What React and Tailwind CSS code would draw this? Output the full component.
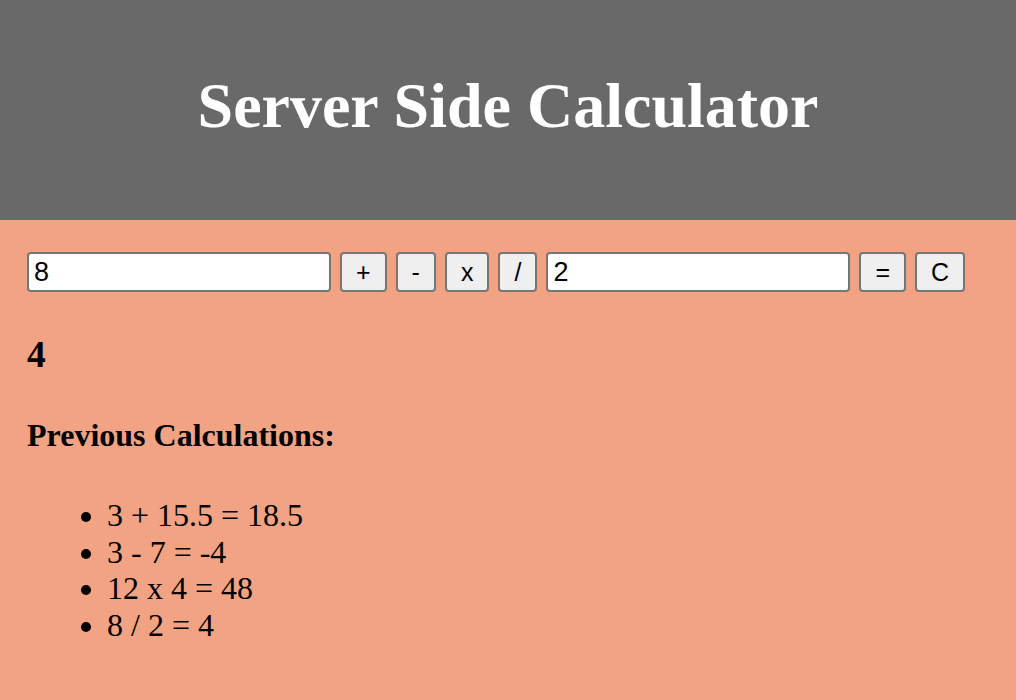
import { useState } from 'react'

const history = ['3 + 15.5 = 18.5', '3 - 7 = -4', '12 x 4 = 48', '8 / 2 = 4']
const ops = ['+', '-', 'x', '/']

export default function App() {
  const [first, setFirst] = useState('8')
  const [second, setSecond] = useState('2')

  const btn =
    "h-[40px] rounded-[4px] border-2 border-[#767676] bg-[#efefef] px-[14px] font-['Liberation_Sans',Arial,sans-serif] text-[25px] leading-none text-black"
  const field =
    "h-[40px] w-[304px] rounded-[4px] border-2 border-[#767676] bg-white px-[5px] font-['Liberation_Sans',Arial,sans-serif] text-[27px] text-black outline-none"

  return (
    <div className="min-h-[700px] bg-[#f2a383] font-['Liberation_Serif','Times_New_Roman',serif] text-black">
      {/* Header */}
      <header className="h-[220px] bg-[#696969] pt-[69px]">
        <h1 className="text-center text-[64px] font-bold leading-[74px] text-white">Server Side Calculator</h1>
      </header>

      <main className="px-[27px]">
        {/* Inputs */}
        <div className="mt-[32px] flex items-center gap-[9px]">
          <input className={field} value={first} onChange={(e) => setFirst(e.target.value)} />
          {ops.map((op) => (
            <button key={op} className={btn}>
              {op}
            </button>
          ))}
          <input className={field} value={second} onChange={(e) => setSecond(e.target.value)} />
          <button className={btn}>=</button>
          <button className={btn}>C</button>
        </div>

        <h3 className="mt-[41px] text-[37.4px] font-bold leading-[43px]">4</h3>

        <h4 className="mt-[41px] text-[32px] font-bold leading-[37px]">Previous Calculations:</h4>

        <ul className="mt-[43px] list-disc pl-[80px] text-[32px] leading-[36.5px]">
          {history.map((h, i) => (
            <li key={i}>{h}</li>
          ))}
        </ul>
      </main>
    </div>
  )
}
